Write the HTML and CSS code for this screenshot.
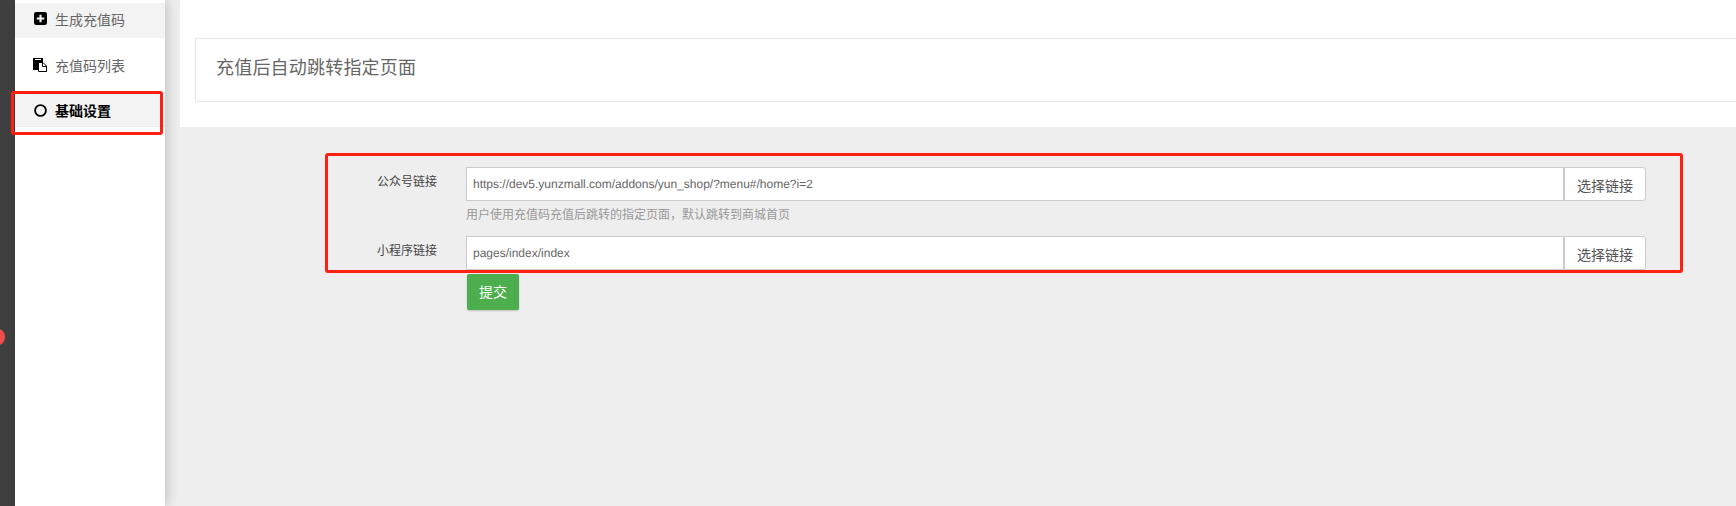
FILE: index.html
```html
<!DOCTYPE html>
<html lang="zh-CN">
<head>
<meta charset="utf-8">
<title>基础设置</title>
<link rel="stylesheet" href="styles.css">
</head>
<body>
<div class="layout">
  <div class="rail"><span class="rail-dot"></span></div>
  <nav class="sidebar">
    <a class="nav-item nav-shaded">
      <svg class="nav-icon" viewBox="0 0 12 12"><path fill="#000" fill-rule="evenodd" d="M2 0h8a2 2 0 0 1 2 2v8a2 2 0 0 1-2 2H2a2 2 0 0 1-2-2V2a2 2 0 0 1 2-2zM5 2.500V5H2.500v2H5v2.500h2V7h2.500V5H7V2.500z"/></svg>
      <span>生成充值码</span>
    </a>
    <a class="nav-item nav-middle">
      <svg class="nav-icon nav-icon-docs" viewBox="0 0 14 14"><path fill="#000" d="M0 0h10v12H0z"/><path fill="#fff" d="M2 1h6v1H2z"/><path fill="#fff" stroke="#000" d="M5.500 4.500h4.500l3.500 3.500v5.500h-8z"/><path fill="none" stroke="#000" d="M9.500 4.500v4h4"/></svg>
      <span>充值码列表</span>
    </a>
    <a class="nav-item nav-active">
      <svg class="nav-icon" viewBox="0 0 12 12"><circle cx="6" cy="6" r="5" fill="none" stroke="#000" stroke-width="1.700"/></svg>
      <span>基础设置</span>
    </a>
  </nav>
  <main class="main">
    <header class="head">
      <div class="head-panel">充值后自动跳转指定页面</div>
    </header>
    <form class="form">
      <div class="field">
        <label class="field-label">公众号链接</label>
        <div class="group">
          <div class="control">https://dev5.yunzmall.com/addons/yun_shop/?menu#/home?i=2</div>
          <div class="addon">选择链接</div>
        </div>
      </div>
      <p class="hint">用户使用充值码充值后跳转的指定页面，默认跳转到商城首页</p>
      <div class="field">
        <label class="field-label">小程序链接</label>
        <div class="group">
          <div class="control">pages/index/index</div>
          <div class="addon">选择链接</div>
        </div>
      </div>
      <div class="submit">提交</div>
    </form>
  </main>
</div>
<div class="mark mark-nav"></div>
<div class="mark mark-form"></div>
</body>
</html>
```

FILE: styles.css
```css
* { box-sizing: border-box; }
html, body { margin: 0; height: 100%; overflow: hidden; }
body {
  font-family: "Liberation Sans", "Noto Sans CJK SC", sans-serif;
  background: #eee;
  color: #555;
}
.layout { display: flex; height: 506px; }
.rail { width: 15px; background: #3f3f3f; position: relative; flex: none; }
.rail-dot {
  position: absolute; left: -9px; top: 329px;
  width: 14px; height: 16px; border-radius: 50%; background: #f44c4c;
}
.sidebar {
  width: 150px; flex: none; background: #fff; padding-top: 3px;
  box-shadow: 3px 0 10px rgba(0,0,0,.16);
  position: relative;
}
.nav-item {
  display: flex; align-items: center; height: 35px;
  padding-left: 19px; gap: 8px; font-size: 14px; color: #666;
}
.nav-shaded { background: #f3f3f3; padding-bottom: 4px; }
.nav-middle { height: 54px; padding-bottom: 1px; }
.nav-active {
  background: #f3f3f3; color: #000; font-weight: 700; height: 35px;
  border-bottom: 1px solid #eaeaea; padding-top: 2px;
}
.nav-icon { width: 13px; height: 13px; flex: none; }
.nav-icon-docs { width: 14px; height: 14px; margin: 0 0 0 -1px; }
.main { flex: 1; min-width: 0; margin-left: 15px; }
.head { background: #fff; height: 127px; padding: 38px 0 0 15px; }
.head-panel {
  height: 64px; border: 1px solid #e6e6e6; border-right: 0;
  padding-left: 20px; line-height: 55px; font-size: 18px; color: #666;
  letter-spacing: .2px;
  font-family: "Noto Sans CJK SC", sans-serif; font-weight: 400;
}
.form { padding: 40px 0 0 0; font-size: 12px; }
.field { display: flex; height: 34px; }
.field-label {
  width: 257px; flex: none; text-align: right; padding: 7px 0 0 0;
  color: #444; line-height: 17px;
}
.group { display: flex; margin-left: 29px; width: 1180px; }
.control {
  width: 1098px; flex: none; height: 34px; background: #fff;
  border: 1px solid #ccc; padding: 0 6px; line-height: 32px;
  font-size: 12px; text-rendering: geometricPrecision; color: #666;
}
.addon {
  width: 82px; flex: none; height: 34px; background: #fff;
  border: 1px solid #ccc; border-radius: 0 3px 3px 0; text-align: center;
  font-size: 14px; line-height: 36px; color: #555;
}
.hint {
  margin: 2px 0 0 286px; height: 33px; line-height: 24px;
  font-size: 12px; color: #999;
}
.submit {
  margin: 4px 0 0 287px; width: 52px; height: 36px; border-radius: 2px;
  background: #4cae4c; color: #fff; font-size: 14px; line-height: 36px;
  text-align: center; box-shadow: 0 1px 2px rgba(0,0,0,.2);
}
.mark { position: absolute; border: 3px solid #ff1f13; border-radius: 3px; }
.mark-nav { left: 11px; top: 91px; width: 152px; height: 44px; }
.mark-form { left: 325px; top: 153px; width: 1358px; height: 120px; }
```
